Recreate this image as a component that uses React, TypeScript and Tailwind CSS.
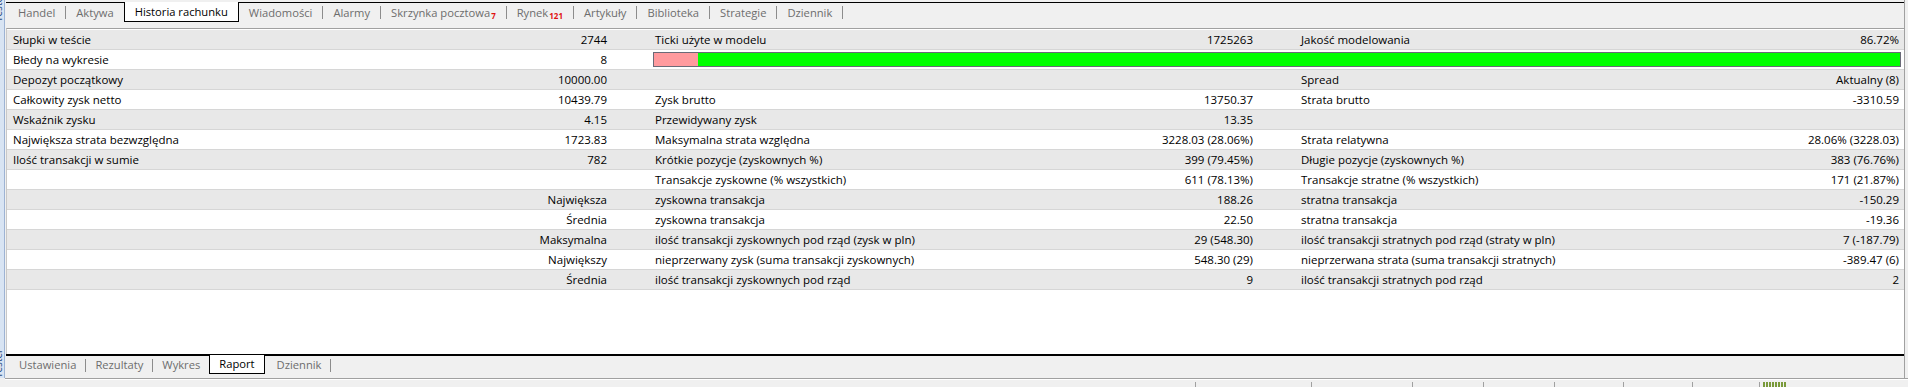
import React from 'react';

type Cell = [string, string];

type Row = {
    cells: Cell[];
    bar?: boolean;
};

const rows: Row[] = [
    { cells: [['Słupki w teście', '2744'], ['Ticki użyte w modelu', '1725263'], ['Jakość modelowania', '86.72%']] },
    { cells: [['Błedy na wykresie', '8']], bar: true },
    { cells: [['Depozyt początkowy', '10000.00'], ['', ''], ['Spread', 'Aktualny (8)']] },
    { cells: [['Całkowity zysk netto', '10439.79'], ['Zysk brutto', '13750.37'], ['Strata brutto', '-3310.59']] },
    { cells: [['Wskaźnik zysku', '4.15'], ['Przewidywany zysk', '13.35'], ['', '']] },
    {
        cells: [
            ['Największa strata bezwzględna', '1723.83'],
            ['Maksymalna strata względna', '3228.03 (28.06%)'],
            ['Strata relatywna', '28.06% (3228.03)'],
        ],
    },
    {
        cells: [
            ['Ilość transakcji w sumie', '782'],
            ['Krótkie pozycje (zyskownych %)', '399 (79.45%)'],
            ['Długie pozycje (zyskownych %)', '383 (76.76%)'],
        ],
    },
    {
        cells: [
            ['', ''],
            ['Transakcje zyskowne (% wszystkich)', '611 (78.13%)'],
            ['Transakcje stratne (% wszystkich)', '171 (21.87%)'],
        ],
    },
    { cells: [['', 'Największa'], ['zyskowna transakcja', '188.26'], ['stratna transakcja', '-150.29']] },
    { cells: [['', 'Średnia'], ['zyskowna transakcja', '22.50'], ['stratna transakcja', '-19.36']] },
    {
        cells: [
            ['', 'Maksymalna'],
            ['ilość transakcji zyskownych pod rząd (zysk w pln)', '29 (548.30)'],
            ['ilość transakcji stratnych pod rząd (straty w pln)', '7 (-187.79)'],
        ],
    },
    {
        cells: [
            ['', 'Największy'],
            ['nieprzerwany zysk (suma transakcji zyskownych)', '548.30 (29)'],
            ['nieprzerwana strata (suma transakcji stratnych)', '-389.47 (6)'],
        ],
    },
    {
        cells: [
            ['', 'Średnia'],
            ['ilość transakcji zyskownych pod rząd', '9'],
            ['ilość transakcji stratnych pod rząd', '2'],
        ],
    },
];

type Tab = { label: string; active?: boolean; badge?: string };

const topTabs: Tab[] = [
    { label: 'Handel' },
    { label: 'Aktywa' },
    { label: 'Historia rachunku', active: true },
    { label: 'Wiadomości' },
    { label: 'Alarmy' },
    { label: 'Skrzynka pocztowa', badge: '7' },
    { label: 'Rynek', badge: '121' },
    { label: 'Artykuły' },
    { label: 'Biblioteka' },
    { label: 'Strategie' },
    { label: 'Dziennik' },
];

const bottomTabs: Tab[] = [
    { label: 'Ustawienia' },
    { label: 'Rezultaty' },
    { label: 'Wykres' },
    { label: 'Raport', active: true },
    { label: 'Dziennik' },
];

const statusSeparators = [1196, 1312, 1413, 1484, 1555, 1624, 1693, 1760];

function TabStrip({ tabs, pad, afterActive }: { tabs: Tab[]; pad: string; afterActive?: string }) {
    return (
        <div className="flex items-stretch h-full text-[11.2px]">
            {tabs.map((t, i) => {
                const prev = tabs[i - 1];
                const showSep = i > 0 && !t.active && !prev?.active;
                return (
                    <React.Fragment key={t.label + i}>
                        {showSep && <div className="w-px h-[13px] self-center bg-[#8c8c8c]" />}
                        {t.active ? (
                            <div className={`${pad} flex items-center bg-white border-x border-b border-black text-black -mt-px`}>
                                {t.label}
                            </div>
                        ) : (
                            <div
                                className={`${pad} ${prev?.active && afterActive ? afterActive : ''} flex items-center text-[#6d6d6d]`}
                            >
                                {t.label}
                                {t.badge && (
                                    <span className="text-[8px] font-bold text-[#e01010] ml-px mt-[7px] leading-none">
                                        {t.badge}
                                    </span>
                                )}
                            </div>
                        )}
                    </React.Fragment>
                );
            })}
            <div className="w-px h-[13px] self-center bg-[#8c8c8c]" />
        </div>
    );
}

export default function App() {
    return (
        <div className="w-[1908px] h-[387px] bg-[#f0f0f0] flex overflow-hidden font-['Open_Sans',sans-serif] text-[11.5px] leading-[14px]">
            {/* side "Terminal" strip */}
            <div className="w-[5px] h-[378px] bg-[#d8e4f3] border-r border-[#9db3d4] overflow-hidden flex flex-col justify-between">
                <div className="h-[22px] w-[5px] overflow-hidden">
                    <div className="w-[14px] h-[22px] -ml-[9px] text-[#2b4a80] text-[10px] [writing-mode:vertical-rl] rotate-180">
                        Tester
                    </div>
                </div>
                <div className="h-[30px] w-[5px] overflow-hidden">
                    <div className="w-[14px] h-[30px] -ml-[9px] text-[#2b4a80] text-[10px] [writing-mode:vertical-rl] rotate-180">
                        Tester
                    </div>
                </div>
            </div>

            <div className="flex-1 flex flex-col min-w-0">
                <div className="flex-1 flex flex-col mr-[3px] ml-[1px] border-r border-[#a0a0a0]">
                    {/* top tabs */}
                    <div className="h-[2px]" />
                    <div className="h-[20px] border-t border-black pl-[2px]">
                        <TabStrip tabs={topTabs} pad="px-[10px]" />
                    </div>
                    <div className="h-[6px]" />

                    {/* report */}
                    <div className="h-[326px] bg-white border-t border-[#a0a0a0] border-l border-l-[#c8c8c8] pt-px">
                        {rows.map((r, ri) => (
                            <div
                                key={ri}
                                className={`h-[20px] flex items-center border-b border-[#d6d6d6] text-black whitespace-nowrap ${
                                    ri % 2 === 0 ? 'bg-[#e8e8e8]' : 'bg-white'
                                }`}
                            >
                                <div className="w-[643px] flex items-center pl-[6px] pr-[43px]">
                                    <span className="flex-1">{r.cells[0][0]}</span>
                                    <span>{r.cells[0][1]}</span>
                                </div>
                                {r.bar ? (
                                    <div className="flex-1 px-[3px] h-full py-[2px]">
                                        <div className="h-full border border-[#6a6a78] bg-[#00ff00] flex">
                                            <div className="w-[44px] h-full bg-[#ff9a9e]" />
                                        </div>
                                    </div>
                                ) : (
                                    <>
                                        <div className="w-[646px] flex items-center pl-[5px] pr-[43px]">
                                            <span className="flex-1">{r.cells[1][0]}</span>
                                            <span>{r.cells[1][1]}</span>
                                        </div>
                                        <div className="flex-1 flex items-center px-[5px]">
                                            <span className="flex-1">{r.cells[2][0]}</span>
                                            <span>{r.cells[2][1]}</span>
                                        </div>
                                    </>
                                )}
                            </div>
                        ))}
                    </div>

                    {/* bottom tabs */}
                    <div className="h-[20px] border-t-2 border-black pl-[4px]">
                        <TabStrip tabs={bottomTabs} pad="px-[9px]" afterActive="ml-[3px]" />
                    </div>
                    <div className="flex-1" />
                </div>

                {/* status bar */}
                <div className="h-[9px] border-t border-[#a0a0a0] relative">
                    <div className="h-px bg-white" />
                    {statusSeparators.map((x) => (
                        <div
                            key={x}
                            className="absolute top-[3px] w-px h-[6px] bg-[#a0a0a0]"
                            style={{ left: x - 6 }}
                        />
                    ))}
                    <div className="absolute top-[3px] left-[1758px] flex gap-px">
                        {[0, 1, 2, 3, 4, 5, 6, 7].map((i) => (
                            <div key={i} className="w-[2px] h-[6px] bg-[#7a9a3a]" />
                        ))}
                    </div>
                </div>
            </div>
        </div>
    );
}
